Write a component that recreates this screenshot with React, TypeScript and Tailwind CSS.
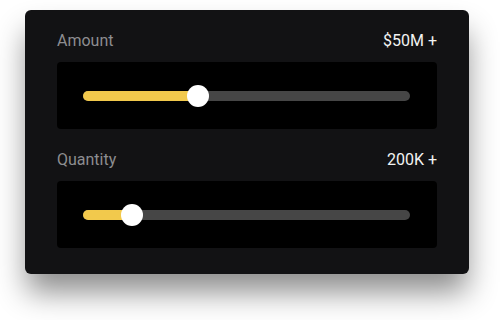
import React from "react";

function Slider({ label, value, pct }: { label: string; value: string; pct: number }) {
  return (
    <div className="flex flex-col">
      <div className="flex h-5 items-center justify-between mb-[11px]">
        <span className="text-[16px] leading-5 text-[#8d8d90]">{label}</span>
        <span className="text-[16px] leading-5 text-[#f2f2f2]">{value}</span>
      </div>
      <div className="flex h-[67px] items-center rounded-[4px] bg-black pl-[26px] pr-[27px]">
        <div className="relative h-[10px] w-full rounded-full bg-[#464646]">
          <div
            className="absolute left-0 top-0 h-full rounded-full bg-[#f2c94c]"
            style={{ width: `${pct}%` }}
          />
          <div
            className="absolute top-1/2 h-[22px] w-[22px] -translate-x-1/2 -translate-y-1/2 rounded-full bg-white"
            style={{ left: `${pct}%` }}
          />
        </div>
      </div>
    </div>
  );
}

export default function App() {
  return (
    <div
      className="h-[320px] w-[500px] bg-white pl-[25px] pt-[10px]"
      style={{ fontFamily: "Roboto, 'Liberation Sans', sans-serif" }}
    >
      <div className="flex w-[444px] flex-col gap-[21px] rounded-[6px] bg-[#121214] px-8 pb-[26px] pt-[21px] shadow-[0_20px_30px_-2px_rgba(0,0,0,0.45)]">
        <Slider label="Amount" value="$50M +" pct={35.2} />
        <Slider label="Quantity" value="200K +" pct={15} />
      </div>
    </div>
  );
}
